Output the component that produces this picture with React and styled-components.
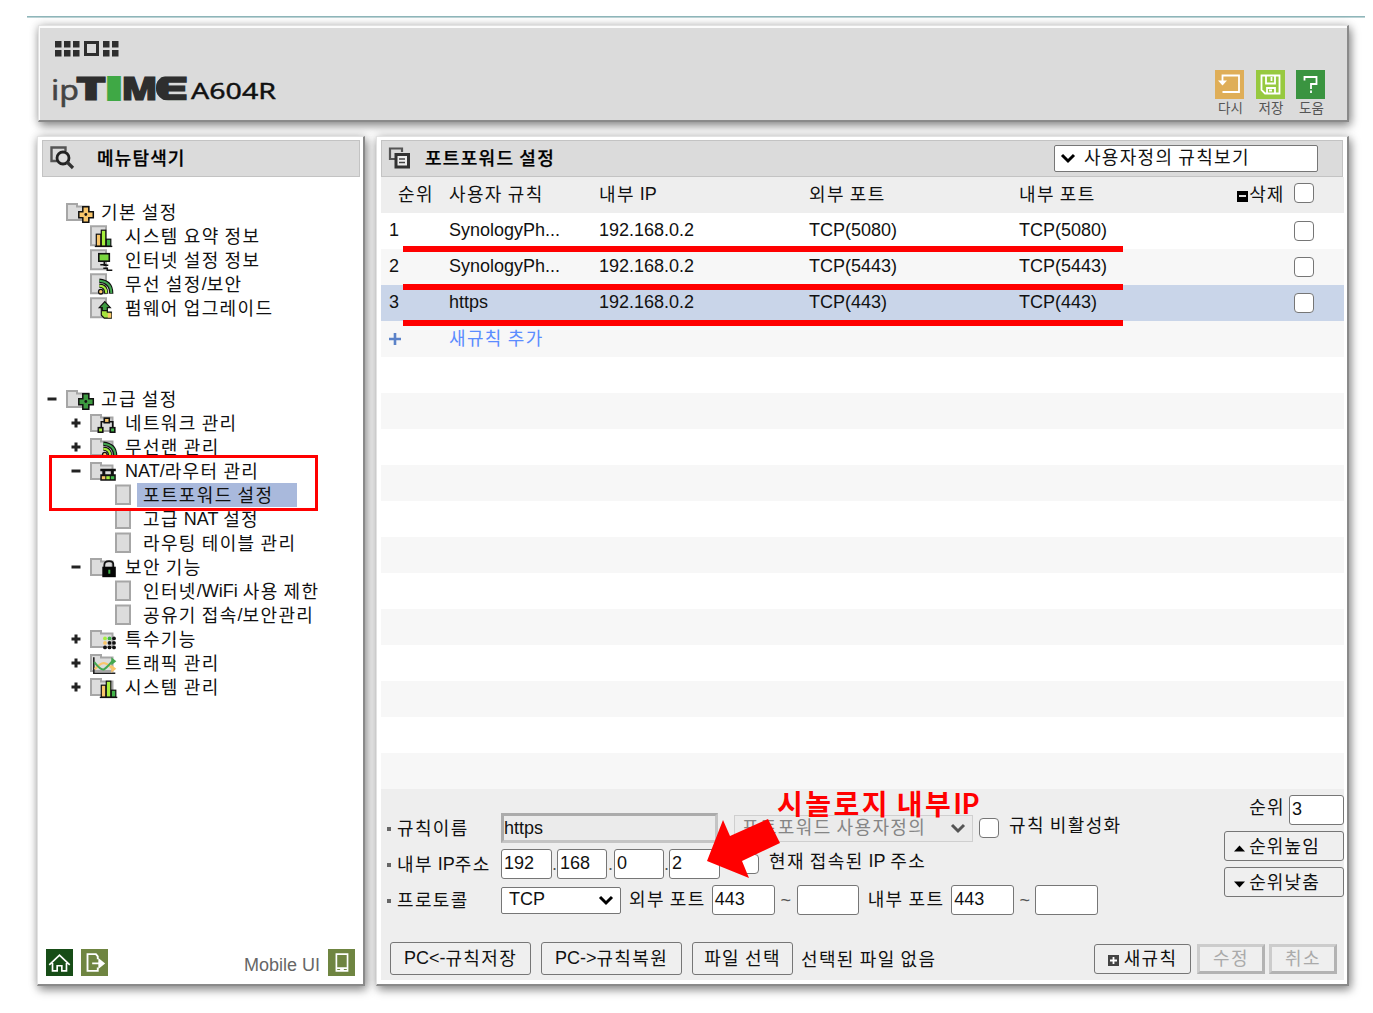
import React from "react";
import styled, { createGlobalStyle } from "styled-components";

const GlobalStyle = createGlobalStyle`
  * {
    box-sizing: border-box;
  }

  body {
    margin: 0;
    background: #fff;
    overflow: hidden;
    color: #111;
    font-family: "Liberation Sans", "Noto Sans CJK KR", sans-serif;
    font-size: 18px;
  }

  svg {
    display: block;
    flex: none;
    overflow: visible;
  }
`;

const Page = styled.div`
  position: relative;
  width: 1373px;
  height: 1013px;
  padding: 16px 8px 0 27px;
`;

const TopLine = styled.div`
  height: 2px;
  background: #8fb6ba;
  border-bottom: 1px solid #bcd3d5;
`;

const Columns = styled.div`
  display: flex;
  gap: 11px;
  margin: 14px 0 0 10px;
`;

const Panel = styled.div`
  border: 1px solid #e2e2e2;
  border-right: 2px solid #8a8a8a;
  border-bottom: 2px solid #8a8a8a;
  box-shadow: 2px 4px 9px rgba(0, 0, 0, 0.4), 0 0 9px rgba(0, 0, 0, 0.18);
  background: #fff;
`;

const Header = styled(Panel)`
  display: flex;
  justify-content: space-between;
  width: 1311px;
  height: 97px;
  margin: 7px 0 0 11px;
  background: #dbdbdb;
  box-shadow: inset 1px 2px 0 #fbfbfb, 2px 4px 9px rgba(0, 0, 0, 0.4),
    0 0 9px rgba(0, 0, 0, 0.18);
`;

const Tools = styled.div`
  display: flex;
  gap: 11.5px;
  padding: 44px 22px 0 0;
`;

const Tool = styled.div`
  width: 29px;
  padding-left: 3px;
  font-size: 13.5px;
  line-height: 17px;
  color: #555;
  white-space: nowrap;

  svg {
    margin-left: -3px;
  }
`;

const Sidebar = styled(Panel)`
  display: flex;
  flex-direction: column;
  width: 328px;
  height: 850px;
  padding: 3px 3px 0 4px;
`;

const Main = styled(Panel)`
  width: 973px;
  height: 850px;
  padding: 3px 3px 0 4px;
`;

const TitleBar = styled.div`
  display: flex;
  align-items: center;
  height: 37px;
  width: ${(p) => p.$width}px;
  padding-left: 7px;
  border: 1px solid #c3c3c3;
  background: #dbdbdb;

  > svg {
    margin-top: -2px;
  }
`;

const Title = styled.div`
  flex: 1;
  margin-left: ${(p) => p.$gap}px;
  padding-bottom: 3px;
  color: #000;
  font-weight: 500;
  -webkit-text-stroke: 0.25px #000;
`;

const Tree = styled.div`
  flex: 1;
  padding: 23px 0 0 4px;
`;

const Branch = styled.div`
  display: flex;
  align-items: center;
  height: 24px;
  margin-top: ${(p) => p.$gap || 0}px;
  padding-left: ${(p) => p.$level * 24}px;
  line-height: 24px;
  white-space: nowrap;
`;

const Sign = styled.div`
  display: flex;
  width: ${(p) => (p.$leaf ? 25 : 20)}px;
  padding-left: 1px;
`;

const IconBox = styled.div`
  width: 35px;
`;

const LeafBox = styled.div`
  width: 22px;
  margin-left: 20px;
`;

const Name = styled.div`
  height: 24px;
  padding: 0 ${(p) => (p.$active ? 24 : 0)}px 0 6px;
  margin-left: ${(p) => (p.$leaf ? 0 : -6)}px;
  background: ${(p) => (p.$active ? "#a9b9dc" : "transparent")};
`;

const SideFooter = styled.div`
  display: flex;
  align-items: center;
  height: 27px;
  margin: 0 5px 8px 4px;
  gap: 8px;
`;

const Mobile = styled.div`
  margin-left: auto;
  padding-top: 5px;
  color: #666;
`;

const Row = styled.div`
  display: grid;
  grid-template-columns: 68px 150px 210px 210px 1fr 50px;
  align-items: center;
  height: 36px;
  line-height: 35px;
  color: ${(p) => (p.$link ? "#5b8cff" : "#111")};
  background: ${(p) => p.$bg};
`;

const Cell = styled.div`
  height: 36px;
  padding-left: ${(p) => p.$pad || 0}px;
  padding-top: ${(p) => p.$top || 0}px;
  white-space: nowrap;
`;

const LastCell = styled(Cell)`
  display: flex;
  align-items: center;
  padding: 0 10px 1px 0;
`;

const Square = styled.div`
  width: 11px;
  height: 11px;
  margin: 4px 1px 0 auto;
  padding: 4px 2px;
  background: #000;

  &::after {
    content: "";
    display: block;
    height: 2px;
    background: #ddd;
  }
`;

const Check = styled.div`
  flex: none;
  width: 20px;
  height: 20px;
  margin-left: ${(p) => p.$ml || 0}px;
  margin-top: ${(p) => p.$mt || 0}px;
  border: 1.6px solid #767676;
  border-radius: 4px;
  background: #fff;
`;

const Select = styled.div`
  display: flex;
  align-items: center;
  flex: none;
  justify-content: ${(p) => (p.$left ? "flex-start" : "space-between")};
  width: ${(p) => p.$w}px;
  height: 27px;
  gap: 8px;
  margin-left: ${(p) => p.$ml || 0}px;
  margin-right: ${(p) => p.$mr || 0}px;
  padding: 0 6px 1px ${(p) => (p.$left ? 5 : 7)}px;
  border: 1px solid ${(p) => (p.$disabled ? "#cfcfcf" : "#767676")};
  border-radius: ${(p) => (p.$disabled ? 0 : 2)}px;
  background: ${(p) => (p.$disabled ? "#ebebeb" : "#fff")};
  color: ${(p) => (p.$disabled ? "#858585" : "#111")};
  line-height: 23px;
  white-space: nowrap;
`;

const Input = styled.div`
  flex: none;
  width: ${(p) => p.$w}px;
  height: 30px;
  margin-left: ${(p) => p.$ml || 0}px;
  padding-left: ${(p) => (p.$disabled ? 0 : 2)}px;
  border: ${(p) => (p.$disabled ? "3px solid" : "1.6px solid #767676")};
  ${(p) => p.$disabled && "border-color: #ababab #c4c4c4 #c4c4c4 #ababab;"}
  border-radius: ${(p) => (p.$disabled ? 0 : 3)}px;
  background: ${(p) => (p.$disabled ? "#ebebeb" : "#fff")};
  line-height: ${(p) => (p.$disabled ? 24 : 27)}px;
`;

const Form = styled.div`
  display: flex;
  flex-direction: column;
  width: 963px;
  height: 191px;
  background: #eee;
`;

const FormTop = styled.div`
  display: flex;
  height: 153px;
`;

const Fields = styled.div`
  width: 843px;
  padding: 21px 0 0 6px;
`;

const Field = styled.div`
  display: flex;
  align-items: center;
  height: 36px;
  white-space: nowrap;
`;

const Label = styled.div`
  display: flex;
  align-items: center;
  width: 114px;
  padding-bottom: 3px;

  &::before {
    content: "";
    width: 4px;
    height: 4px;
    margin: 4px 6px 0 0;
    background: #666;
  }
`;

const Caption = styled.div`
  margin-left: ${(p) => p.$ml || 0}px;
  margin-top: ${(p) => p.$mt || 0}px;
`;

const Dot = styled.div`
  width: ${(p) => p.$w}px;
  text-align: center;
  color: #555;
`;

const Order = styled.div`
  display: flex;
  flex-direction: column;
  gap: 6px;
  width: 120px;
  padding-top: 6px;
`;

const OrderRow = styled.div`
  display: flex;
  justify-content: flex-end;
  height: 30px;
  line-height: 25px;
`;

const Button = styled.div`
  display: flex;
  align-items: center;
  justify-content: center;
  flex: none;
  gap: ${(p) => p.$gap || 0}px;
  width: ${(p) => p.$w}px;
  height: ${(p) => p.$h || 30}px;
  margin-left: ${(p) => p.$ml || 0}px;
  padding: 0 ${(p) => p.$pr || 0}px 0 0;
  border: ${(p) => (p.$disabled ? "3px solid" : "1.6px solid #767676")};
  ${(p) => p.$disabled && "border-color: #ccc #b3b3b3 #b3b3b3 #ccc;"}
  border-radius: ${(p) => (p.$disabled ? 0 : 3)}px;
  background: #efefef;
  color: ${(p) => (p.$disabled ? "#aaa" : "#111")};
  line-height: 24px;
  white-space: nowrap;

  svg {
    margin-top: 4px;
  }
`;

const Actions = styled.div`
  display: flex;
  align-items: center;
  height: 33px;
  padding-left: 9px;
`;

const Right = styled.div`
  display: flex;
  margin-left: auto;
  padding-right: 7px;
`;

const Overlay = styled.svg`
  position: absolute;
  left: 0;
  top: 0;
  pointer-events: none;
`;

const Note = styled.div`
  position: absolute;
  left: 777px;
  top: 782px;
  color: #f00;
  font-family: Lato, "Noto Sans CJK KR", sans-serif;
  font-size: 28px;
  font-weight: 700;
  line-height: 42px;
  white-space: nowrap;
`;

const Wide = styled.span`
  letter-spacing: ${(p) => p.$ls}px;
  vertical-align: -1px;
`;

// hangul runs are set a little wider than latin ones
const T = ({ children, ls = 1.35 }) => (
  <span>
    {children.split(/([가-힣]+)/).map((part, i) =>
      i % 2 ? (
        <Wide key={i} $ls={ls}>
          {part}
        </Wide>
      ) : (
        part
      )
    )}
  </span>
);

const Chevron = ({ color = "#000" }) => (
  <svg width="16" height="16" viewBox="0 0 16 16">
    <path d="M2 5l6 6 6-6" fill="none" stroke={color} strokeWidth="3" />
  </svg>
);

const Logo = () => (
  <svg width="250" height="90" viewBox="0 0 250 90">
    <defs>
      <clipPath id="round">
        <rect x="117" y="49.5" width="60" height="25" rx="12" />
      </clipPath>
    </defs>
    <g fill="#2e2e2e">
      {[16, 25, 34, 64, 73].map((x) => (
        <React.Fragment key={x}>
          <rect x={x} y="15" width="6.5" height="6.5" />
          <rect x={x} y="24" width="6.5" height="6.5" />
        </React.Fragment>
      ))}
      <rect x="46.5" y="16.5" width="12" height="12" fill="none" stroke="#2e2e2e" strokeWidth="3" />
    </g>
    <g fontFamily="Noto Sans" fill="#2e2e2e">
      <text
        x="12"
        y="74"
        fontSize="28"
        textLength="28"
        lengthAdjust="spacingAndGlyphs"
        fill="#444"
        stroke="#444"
        strokeWidth="0.5"
      >
        ip
      </text>
      <g fontFamily="Open Sans" fontWeight="800" fontSize="32.5" stroke="#2e2e2e" strokeWidth="1.2">
        <text x="37" y="73.5" textLength="30" lengthAdjust="spacingAndGlyphs">T</text>
        <text x="82.5" y="73.5" textLength="36" lengthAdjust="spacingAndGlyphs">M</text>
      </g>
      <g fontFamily="Inter" fontWeight="900" fontSize="32" stroke="#2e2e2e" strokeWidth="1.2">
        <text
          x="67.5"
          y="73.5"
          textLength="15"
          lengthAdjust="spacingAndGlyphs"
          fill="#3fa845"
          stroke="#3fa845"
          strokeWidth="2.2"
        >
          I
        </text>
        <text x="115" y="73.5" textLength="34" lengthAdjust="spacingAndGlyphs" clipPath="url(#round)">
          E
        </text>
      </g>
      <text x="152" y="73" fontSize="21.5" textLength="85" lengthAdjust="spacingAndGlyphs" fill="#111" stroke="#111" strokeWidth="0.4">
        A604R
      </text>
    </g>
  </svg>
);

const Tile = ({ bg, size = 29, children }) => (
  <svg width={size} height={size} viewBox="0 0 29 29">
    <rect width="29" height="29" fill={bg} />
    <g fill="none" stroke="#fff" strokeWidth="1.8">
      {children}
    </g>
  </svg>
);

const PlusMinus = ({ open }) => (
  <svg width="10" height="10" viewBox="0 0 10 10">
    <path d={open ? "M0.5 5H9.5" : "M0.5 5H9.5M5 0.5V9.5"} stroke="#222" strokeWidth="3" />
  </svg>
);

const Cross = ({ fill }) => (
  <g>
    <path
      d="M16.5 4.5h6v5h4.500v6h-4.500v4.500h-6v-4.500H12.500V9.500h4z"
      fill={fill}
      stroke="#111"
      strokeWidth="1.5"
    />
    <circle cx="19.500" cy="12.300" r="1.4" fill="#111" />
  </g>
);

const Bars = ({ x = 0 }) => (
  <g transform={`translate(${x} 0)`} stroke="#111" strokeWidth="1.2">
    <rect x="6" y="8" width="4.5" height="12" fill="#f9c66b" />
    <rect x="11" y="4" width="4.5" height="16" fill="#a6ee3d" />
    <rect x="16" y="13" width="4.5" height="7" fill="#43b44a" />
    <path d="M4.5 20.2h17.5" strokeWidth="1.4" />
  </g>
);

const Waves = ({ x = 0 }) => (
  <g transform={`translate(${x} 0)`} fill="none">
    <path d="M9 6.500q12 1 12 13M9 11.500q7 0 7 8" stroke="#111" strokeWidth="4.2" />
    <path d="M9 6.500q12 1 12 12.500" stroke="#43a850" strokeWidth="2" />
    <path d="M9 11.500q7 0 7 7.500" stroke="#a6ee3d" strokeWidth="2" />
    <circle cx="10.5" cy="17.5" r="2.3" fill="#f9c66b" stroke="#111" strokeWidth="1.3" />
  </g>
);

const glyphs = {
  basic: <Cross fill="#f9c66b" />,
  advanced: <Cross fill="#3d9a40" />,
  bars: <Bars />,
  barsFolder: <Bars x={5} />,
  monitor: (
    <g stroke="#111" strokeWidth="1.6">
      <rect x="8.5" y="3.5" width="10.5" height="7.5" fill="#79d63e" />
      <path d="M14 11v4h4M10 14.500h6M13 18h4v2h5" fill="none" />
    </g>
  ),
  waves: <Waves />,
  wavesFolder: <Waves x={4} />,
  upgrade: (
    <g stroke="#111" strokeWidth="1.2">
      <path d="M11 9v8l3 3h7v-6h-4v-5z" fill="#a6e33d" />
      <path d="M14.500 3.500l5.500 6h-3v3h-5v-3H9z" fill="#3d9a40" />
      <path d="M17.500 15h3.500v4.500h-3.500z" fill="#f9c66b" stroke="none" />
    </g>
  ),
  network: (
    <g stroke="#111" strokeWidth="1.6">
      <path d="M11 14.500V8.500h11.500v6" fill="none" />
      <rect x="14" y="5" width="5" height="4.5" fill="#f9c66b" />
      <rect x="8" y="14.5" width="4.5" height="4.5" fill="#a6ee3d" />
      <rect x="20" y="14.5" width="4.5" height="4.5" fill="#43b44a" />
    </g>
  ),
  router: (
    <g>
      <path d="M10 7.500h15.500v2.500H10zM12 10h3v4h-3zM20.500 10h3v4h-3zM10 13h15.500v6.500H10z" fill="#111" />
      <rect x="11.5" y="15" width="3.5" height="3" fill="#f9c66b" />
      <rect x="16" y="15" width="3.5" height="3" fill="#a6ee3d" />
      <rect x="20.5" y="15" width="3.5" height="3" fill="#43b44a" />
    </g>
  ),
  lock: (
    <g>
      <path d="M14 11V8q0-4 4.700-4T23 8v3" fill="none" stroke="#111" strokeWidth="1.8" />
      <rect x="12" y="9.5" width="13.5" height="10.5" fill="#050505" />
      <rect x="18" y="12.5" width="2" height="4" fill="#43b44a" />
    </g>
  ),
  dots: (
    <g>
      {[7.5, 12, 16.5].map((y, r) =>
        [13, 17.5, 22].map((x, c) => (
          <circle
            key={x + "-" + y}
            cx={x + 1.7}
            cy={y + 1.7}
            r="1.9"
            fill={
              [
                ["#a6ee3d", "#43b44a", "#111"],
                ["#f9c66b", "#111", "#111"],
                ["#111", "#111", "#111"],
              ][r][c]
            }
          />
        ))
      )}
    </g>
  ),
  graph: (
    <g fill="none">
      <path d="M3.500 4v16h21.500" stroke="#222" strokeWidth="1.6" />
      <path d="M4.500 16q6-7 10-6t7 5" stroke="#f9c66b" strokeWidth="2.2" />
      <path d="M4 9q7 9 10 7t8-8" stroke="#43a850" strokeWidth="2" />
      <path d="M21 4l5 4-5 4z" fill="#43a850" />
      <path d="M21 11.500l5 4-5 4z" fill="#f9c66b" />
    </g>
  ),
};

const NodeIcon = ({ type, folder, leaf }) => (
  <svg width="29" height="24" viewBox="0 0 29 24">
    {leaf ? (
      <rect x="1" y="2.5" width="14" height="18.5" fill="#dcdcdc" stroke="#a6a6a6" strokeWidth="2" />
    ) : folder ? (
      <path d="M1 4h10v2.500h11.500v13.500H1z" fill="#dcdcdc" stroke="#a6a6a6" strokeWidth="2" />
    ) : (
      <path d="M1 2.200h15v19H1z" fill="#dcdcdc" stroke="#a6a6a6" strokeWidth="2" />
    )}
    <g transform="translate(0.3 2.2)">{glyphs[type]}</g>
  </svg>
);

const tree = [
  { name: "기본 설정", level: 0, icon: "basic", folder: true },
  { name: "시스템 요약 정보", level: 1, icon: "bars" },
  { name: "인터넷 설정 정보", level: 1, icon: "monitor" },
  { name: "무선 설정/보안", level: 1, icon: "waves" },
  { name: "펌웨어 업그레이드", level: 1, icon: "upgrade" },
  { name: "고급 설정", level: 0, icon: "advanced", folder: true, sign: "-", gap: 67 },
  { name: "네트워크 관리", level: 1, icon: "network", folder: true, sign: "+" },
  { name: "무선랜 관리", level: 1, icon: "wavesFolder", folder: true, sign: "+" },
  { name: "NAT/라우터 관리", level: 1, icon: "router", folder: true, sign: "-" },
  { name: "포트포워드 설정", level: 1, leaf: true, active: true },
  { name: "고급 NAT 설정", level: 1, leaf: true },
  { name: "라우팅 테이블 관리", level: 1, leaf: true },
  { name: "보안 기능", level: 1, icon: "lock", folder: true, sign: "-" },
  { name: "인터넷/WiFi 사용 제한", level: 1, leaf: true },
  { name: "공유기 접속/보안관리", level: 1, leaf: true },
  { name: "특수기능", level: 1, icon: "dots", folder: true, sign: "+" },
  { name: "트래픽 관리", level: 1, icon: "graph", folder: true, sign: "+" },
  { name: "시스템 관리", level: 1, icon: "barsFolder", folder: true, sign: "+" },
];

const rules = [
  ["1", "SynologyPh...", "TCP(5080)"],
  ["2", "SynologyPh...", "TCP(5443)"],
  ["3", "https", "TCP(443)"],
];

const rowColor = (i) => (i === 2 ? "#c9d5e9" : i % 2 ? "#f7f7f7" : "#fff");

const TreeItem = ({ item }) => {
  const Box = item.leaf ? LeafBox : IconBox;
  return (
    <Branch $level={item.level} $gap={item.gap}>
      <Sign $leaf={item.leaf}>{item.sign && <PlusMinus open={item.sign === "-"} />}</Sign>
      <Box>
        <NodeIcon type={item.icon} folder={item.folder} leaf={item.leaf} />
      </Box>
      <Name $leaf={item.leaf} $active={item.active}>
        <T>{item.name}</T>
      </Name>
    </Branch>
  );
};

const RuleTable = () => (
  <>
    <Row $bg="#eee">
      <Cell $pad={17}><T>순위</T></Cell>
      <Cell><T>사용자 규칙</T></Cell>
      <Cell><T>내부 IP</T></Cell>
      <Cell><T>외부 포트</T></Cell>
      <LastCell>
        <T>내부 포트</T>
        <Square />
        <T ls={0.8}>삭제</T>
      </LastCell>
      <Check $mt={-5} />
    </Row>
    {rules.map(([n, name, port], i) => (
      <Row key={n} $bg={rowColor(i)}>
        <Cell $pad={8}>{n}</Cell>
        <Cell>{name}</Cell>
        <Cell>192.168.0.2</Cell>
        <Cell>{port}</Cell>
        <Cell>{port}</Cell>
        <Check $mt={-1} />
      </Row>
    ))}
    <Row $bg="#f7f7f7" $link>
      <Cell $pad={8} $top={12}>
        <svg width="12" height="12" viewBox="0 0 12 12">
          <path d="M0 6h12M6 0v12" stroke="#5b82c8" strokeWidth="2.6" />
        </svg>
      </Cell>
      <Cell><T>새규칙 추가</T></Cell>
    </Row>
    {Array.from({ length: 12 }, (_, i) => (
      <Row key={i} $bg={rowColor(i + 4)} />
    ))}
  </>
);

const RuleForm = () => (
  <Form>
    <FormTop>
      <Fields>
        <Field>
          <Label><T>규칙이름</T></Label>
          <Input $w={217} $disabled>https</Input>
          <Select $w={239} $ml={16} $disabled>
            <T>포트포워드 사용자정의</T>
            <Chevron color="#555" />
          </Select>
          <Check $ml={6} />
          <Caption $ml={10} $mt={-8}><T>규칙 비활성화</T></Caption>
        </Field>
        <Field>
          <Label><T>내부 IP주소</T></Label>
          <Input $w={51}>192</Input>
          <Dot $w={5}>.</Dot>
          <Input $w={50}>168</Input>
          <Dot $w={7}>.</Dot>
          <Input $w={50}>0</Input>
          <Dot $w={5}>.</Dot>
          <Input $w={51}>2</Input>
          <Check $ml={19} />
          <Caption $ml={10} $mt={-8}><T>현재 접속된 IP 주소</T></Caption>
        </Field>
        <Field>
          <Label><T>프로토콜</T></Label>
          <Select $w={120}>
            TCP
            <Chevron />
          </Select>
          <Caption $ml={8} $mt={-4}><T>외부 포트</T></Caption>
          <Input $w={63} $ml={6}>443</Input>
          <Dot $w={22}>~</Dot>
          <Input $w={62} />
          <Caption $ml={9} $mt={-4}><T>내부 포트</T></Caption>
          <Input $w={63} $ml={7}>443</Input>
          <Dot $w={21}>~</Dot>
          <Input $w={63} />
        </Field>
      </Fields>
      <Order>
        <OrderRow>
          <T>순위</T>
          <Input $w={55} $ml={4}>3</Input>
        </OrderRow>
        <Button $w={120} $gap={4} $pr={14}>
          <svg width="11" height="12" viewBox="0 0 11 12"><path d="M0 9.500l5.500-6L11 9.500z" /></svg>
          <T ls={1.1}>순위높임</T>
        </Button>
        <Button $w={120} $gap={4} $pr={14}>
          <svg width="11" height="12" viewBox="0 0 11 12"><path d="M0 3.500l5.500 6L11 3.500z" /></svg>
          <T ls={1.1}>순위낮춤</T>
        </Button>
      </Order>
    </FormTop>
    <Actions>
      <Button $w={141} $h={33}><T>{"PC<-규칙저장"}</T></Button>
      <Button $w={141} $h={33} $ml={10}><T>{"PC->규칙복원"}</T></Button>
      <Button $w={101} $h={33} $ml={10}><T>파일 선택</T></Button>
      <Caption $ml={8} $mt={-2}><T>선택된 파일 없음</T></Caption>
      <Right>
        <Button $w={97} $gap={5}>
          <svg width="11" height="11" viewBox="0 0 11 11">
            <rect width="11" height="11" fill="#444" />
            <path d="M2 5.500h7M5.500 2v7" stroke="#fff" strokeWidth="1.8" />
          </svg>
          <T>새규칙</T>
        </Button>
        <Button $w={68} $ml={6} $disabled><T>수정</T></Button>
        <Button $w={68} $ml={4} $disabled><T>취소</T></Button>
      </Right>
    </Actions>
  </Form>
);

export default function App() {
  return (
    <Page>
      <GlobalStyle />
      <TopLine />
      <Header>
        <Logo />
        <Tools>
          <Tool>
            <Tile bg="#dfae58">
              <path d="M7.500 11V5.500h16.500v16.500H7.500" />
              <path d="M3 10.500h9l-4.500 5z" fill="#fff" stroke="none" />
            </Tile>
            <T ls={0}>다시</T>
          </Tool>
          <Tool>
            <Tile bg="#97c93f">
              <path d="M5.500 5.500h18v18H9l-3.500-3.500zM10 5.500v8h9v-8M15.500 7v4M11 23.500v-5.500h8v5.500M13 20.500h3" />
            </Tile>
            <T ls={0}>저장</T>
          </Tool>
          <Tool>
            <Tile bg="#3a9440">
              <path d="M8.500 10.500V7h12v7H15v5M15 20.500v2.500" />
            </Tile>
            <T ls={0}>도움</T>
          </Tool>
        </Tools>
      </Header>
      <Columns>
        <Sidebar>
          <TitleBar $width={318}>
            <svg width="25" height="24" viewBox="0 0 25 24">
              <path d="M7 15H1.500V1.500h14V5" fill="none" stroke="#555" strokeWidth="2.4" />
              <circle cx="13" cy="12" r="6" fill="#ddd" stroke="#222" strokeWidth="2.8" />
              <path d="M17 16l6 6" stroke="#333" strokeWidth="3.2" />
            </svg>
            <Title $gap={22}><T ls={1.15}>메뉴탐색기</T></Title>
          </TitleBar>
          <Tree>
            {tree.map((item) => (
              <TreeItem key={item.name} item={item} />
            ))}
          </Tree>
          <SideFooter>
            <Tile bg="#174d17" size={27}>
              <path d="M3.500 17L14.500 6.500 25.500 17M7 15v8.500h5V18h5v5.500h5V15" />
            </Tile>
            <Tile bg="#6f8541" size={27}>
              <path d="M18 11V8l-2-2.500H7v18h11V20" strokeWidth="2" />
              <path d="M12 15.500h8M19.500 11.500l5 4-5 4z" fill="#fff" />
            </Tile>
            <Mobile>Mobile UI</Mobile>
            <Tile bg="#6f8541" size={27}>
              <path d="M9 5.500h12v18H9zM9 20.500h12M13 22h4" />
            </Tile>
          </SideFooter>
        </Sidebar>
        <Main>
          <TitleBar $width={962}>
            <svg width="22" height="22" viewBox="0 0 22 22">
              <path d="M6 12H1V1.500h12V5" fill="none" stroke="#555" strokeWidth="2.2" />
              <path d="M7 7.500h12.500v12.500H7z" fill="#eee" stroke="#333" strokeWidth="3" />
              <path d="M10 12h6M10 15.500h6" stroke="#444" strokeWidth="1.6" />
            </svg>
            <Title $gap={14}><T ls={1.3}>포트포워드 설정</T></Title>
            <Select $w={264} $mr={24} $left>
              <Chevron />
              <T ls={1.3}>사용자정의 규칙보기</T>
            </Select>
          </TitleBar>
          <RuleTable />
          <RuleForm />
        </Main>
      </Columns>
      <Overlay width="1373" height="1013" viewBox="0 0 1373 1013">
        <path d="M403 249h720M403 287h720M403 323h720" stroke="#f00" strokeWidth="6" />
        <rect x="50.5" y="456.5" width="266" height="53" fill="none" stroke="#f00" strokeWidth="3" />
        <path d="M707 861l16-41 7 16 38-17 12 24-38 18 7 17z" fill="#f00" />
      </Overlay>
      <Note><T ls={2.5}>시놀로지 내부IP</T></Note>
    </Page>
  );
}
